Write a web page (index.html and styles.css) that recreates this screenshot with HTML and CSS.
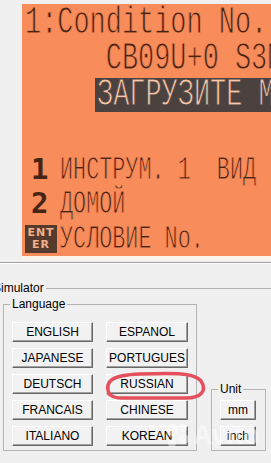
FILE: index.html
```html
<!DOCTYPE html>
<html lang="ru">
<head>
    <meta charset="UTF-8">
    <title>Simulator</title>
    <link rel="stylesheet" href="styles.css">
</head>
<body>

<div class="lcd">
    <div class="line big"><span class="txt">1:Condition No.</span></div>
    <div class="line big"><span class="txt">     CB09U+0 S3M</span></div>
    <div class="line big"><div class="inv"><span class="txt">ЗАГРУЗИТЕ МОДЕЛЬ</span></div></div>
    <div class="line small l4"><b class="key">1</b><span class="txt">ИНСТРУМ. 1  ВИД</span></div>
    <div class="line small l5"><b class="key">2</b><span class="txt">ДОМОЙ</span></div>
    <div class="line small l6"><span class="enter">ENT<br>ER</span><span class="txt">УСЛОВИЕ No.</span></div>
</div>
<div class="rule"></div>

<fieldset class="group sim">
    <legend>Simulator</legend>
    <div class="sim-row">
        <fieldset class="group lang">
            <legend>Language</legend>
            <div class="lang-grid">
                <button>ENGLISH</button>
                <button>ESPANOL</button>
                <button>JAPANESE</button>
                <button>PORTUGUES</button>
                <button>DEUTSCH</button>
                <button>RUSSIAN</button>
                <button>FRANCAIS</button>
                <button>CHINESE</button>
                <button>ITALIANO</button>
                <button>KOREAN</button>
            </div>
        </fieldset>
        <fieldset class="group unit">
            <legend>Unit</legend>
            <div class="unit-col">
                <button>mm</button>
                <button>inch</button>
            </div>
        </fieldset>
    </div>
</fieldset>

<!-- red marker loop around RUSSIAN -->
<svg class="mark" width="271" height="463" viewBox="0 0 271 463">
    <path d="M109 394 C104 381 112 375 140 374 C168 373 194 372 201 381 C207 390 202 398 186 398 L122 398 C111 398 107 394 108 386"
          fill="none" stroke="#e4505e" stroke-width="3.5" stroke-linecap="round"/>
</svg>

<div class="watermark">
    <svg width="26" height="28" viewBox="0 0 26 28">
        <circle cx="8" cy="8" r="6" fill="#fff"/>
        <circle cx="19" cy="6" r="4" fill="#fff"/>
        <circle cx="20" cy="17" r="5" fill="#fff"/>
        <circle cx="8" cy="21" r="4" fill="#fff"/>
    </svg>
    <span>Avito</span>
</div>

</body>
</html>
```

FILE: styles.css
```css
body {
    margin: 0;
    width: 271px;
    height: 463px;
    overflow: hidden;
    position: relative;
    background: #f0f0f0;
    font-family: "Liberation Sans", Arial, sans-serif;
    font-size: 12px;
}

/* orange LCD panel */
.lcd {
    margin: 4px 0 0 22px;
    height: 256px;
    padding: 1px 0 0 3px;
    box-sizing: border-box;
    background: #f88c5a;
    border-bottom: 4px solid #fcf3ea;
    overflow: hidden;
    color: #472313;
    font-family: "Liberation Mono", monospace;
    white-space: nowrap;
}

.line {
    white-space: pre;
}

.big {
    height: 36px;
    font-size: 39px;
    line-height: 36px;
}

.small {
    height: 29px;
    font-size: 33px;
    line-height: 29px;
}

/* thin LCD strokes: orange outline eats into the glyph */
.txt {
    display: inline-block;
    transform-origin: 0 0;
    white-space: pre;
    -webkit-text-stroke: 1px #f88c5a;
}

.big .txt {
    transform: scaleX(.69);
}

.small .txt {
    transform: scaleX(.66);
}

.inv {
    margin: 1px 0 0 70px;
    height: 34px;
    line-height: 34px;
    padding-left: 2px;
    background: #4b4240;
    color: #fbc6a8;
}

.inv .txt {
    -webkit-text-stroke: 1px #4b4240;
}

.l4 {
    margin-top: 41px;
}

.l5 {
    margin-top: 5px;
}

.l6 {
    margin-top: 7px;
}

.key {
    display: inline-block;
    width: 29px;
    padding-left: 6px;
    color: #472313;
    font-family: "DejaVu Sans Mono", monospace;
    font-size: 29px;
}

.enter {
    display: inline-block;
    vertical-align: top;
    width: 32px;
    height: 28px;
    margin-right: 3px;
    box-sizing: border-box;
    padding-top: 2px;
    background: #553a2e;
    color: #f3b08c;
    font-family: "DejaVu Sans", sans-serif;
    font-weight: bold;
    font-size: 11px;
    line-height: 12px;
    letter-spacing: 1px;
    text-align: center;
    white-space: normal;
}

.rule {
    margin-top: 2px;
    border-top: 1px solid #a0a0a0;
    border-bottom: 1px solid #fff;
}

/* group boxes */
.group {
    border: 1px solid #b4b4b4;
    margin: 0;
    min-width: 0;
}

.group legend {
    padding: 0 2px;
    line-height: 14px;
    color: #000;
}

.sim {
    margin: 17px -30px 0 -14px;
    padding: 2px 0 30px 4px;
}

.sim-row {
    display: flex;
    align-items: flex-end;
}

.lang {
    margin-left: 12px;
    padding: 11px 8px 4px 6px;
}

.lang-grid {
    display: grid;
    grid-template-columns: 81px 82px;
    column-gap: 13px;
    row-gap: 6px;
    margin-left: 2px;
}

.unit {
    margin-left: 14px;
    padding: 4px 9px 4px 6px;
}

.unit-col {
    display: grid;
    grid-template-columns: 36px;
    row-gap: 6px;
    margin-left: 2px;
}

button {
    height: 20px;
    padding: 0;
    box-sizing: border-box;
    background: #f2f2f2;
    border: 1px solid;
    border-color: #fff #696969 #696969 #fff;
    box-shadow: inset -1px -1px #a0a0a0;
    border-radius: 0;
    font-family: "Liberation Sans", Arial, sans-serif;
    font-size: 12px;
    color: #000;
}

/* overlays */
.mark {
    position: absolute;
    left: 0;
    top: 0;
    pointer-events: none;
}

.watermark {
    position: absolute;
    left: 164px;
    top: 420px;
    display: flex;
    align-items: center;
    gap: 3px;
    opacity: .45;
    color: #fff;
    font-weight: bold;
    font-size: 27px;
    pointer-events: none;
}
```
